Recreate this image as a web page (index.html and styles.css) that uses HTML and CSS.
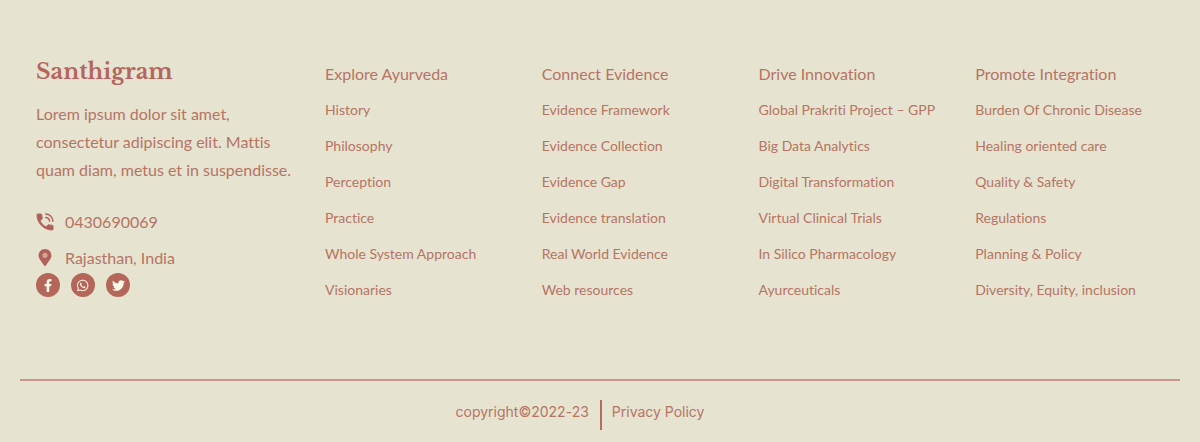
FILE: index.html
```html
<!DOCTYPE html>
<html lang="en">
<head>
<meta charset="utf-8">
<meta name="viewport" content="width=device-width, initial-scale=1">
<title>Santhigram</title>
<link rel="stylesheet" href="styles.css">
</head>
<body>
<footer class="footer">
  <div class="footer-main">
    <section class="brand">
      <h2 class="brand-name">Santhigram</h2>
      <p class="brand-text">Lorem ipsum dolor sit amet, consectetur adipiscing elit. Mattis quam diam, metus et in suspendisse.</p>
      <ul class="contact">
        <li>
          <svg class="contact-icon" viewBox="2 2 20 20" aria-hidden="true">
            <path fill="currentColor" stroke="currentColor" stroke-width="0.800" stroke-linejoin="round" d="M6.620 10.790c1.440 2.830 3.760 5.140 6.590 6.590l2.200-2.200c.27-.27.67-.36 1.020-.24 1.120.37 2.330.57 3.570.57.550 0 1 .45 1 1V20c0 .55-.45 1-1 1-9.390 0-17-7.610-17-17 0-.55.45-1 1-1h3.500c.55 0 1 .45 1 1 0 1.250.2 2.450.57 3.570.11.35.03.74-.25 1.020l-2.200 2.200z"/>
            <g fill="none" stroke="currentColor" stroke-width="1.600" stroke-linecap="round"><path d="M12.800 3.200A8 8 0 0 1 20.800 11.200"/><path d="M12.800 6.900A4.300 4.300 0 0 1 17.100 11.200"/></g>
          </svg>
          <a href="tel:0430690069">0430690069</a>
        </li>
        <li>
          <svg class="contact-icon" viewBox="-48 0 480 540" aria-hidden="true">
            <path fill="currentColor" d="M172.268 501.670C26.970 291.031 0 269.413 0 192 0 85.961 85.961 0 192 0s192 85.961 192 192c0 77.413-26.970 99.031-172.268 309.670-9.535 13.774-29.930 13.773-39.464 0z"/>
            <circle class="pin-eye" cx="192" cy="192" r="76"/>
          </svg>
          <span>Rajasthan, India</span>
        </li>
      </ul>
      <div class="social">
        <a href="#" aria-label="Facebook">
          <svg viewBox="0 0 320 512" aria-hidden="true"><path fill="currentColor" d="M279.140 288l14.220-92.660h-88.910v-60.130c0-25.350 12.420-50.060 52.240-50.060h40.420V6.260S260.430 0 225.360 0c-73.220 0-121.080 44.380-121.080 124.720v70.620H22.890V288h81.390v224h100.170V288z"/></svg>
        </a>
        <a href="#" aria-label="WhatsApp">
          <svg viewBox="0 0 448 512" aria-hidden="true"><path fill="currentColor" d="M380.900 97.100C339 55.100 283.200 32 223.900 32c-122.400 0-222 99.600-222 222 0 39.100 10.200 77.300 29.600 111L0 480l117.700-30.900c32.400 17.700 68.900 27 106.100 27h.1c122.300 0 224.100-99.600 224.100-222 0-59.300-25.200-115-67.100-157zm-157 341.600c-33.200 0-65.700-8.900-94-25.700l-6.700-4-69.800 18.300L72 359.200l-4.400-7c-18.500-29.400-28.200-63.300-28.200-98.200 0-101.700 82.800-184.500 184.600-184.500 49.300 0 95.600 19.200 130.400 54.100 34.800 34.900 56.200 81.200 56.100 130.500 0 101.800-84.900 184.600-186.600 184.600zm101.200-138.200c-5.500-2.800-32.800-16.200-37.900-18-5.100-1.900-8.800-2.800-12.500 2.800-3.700 5.600-14.300 18-17.600 21.800-3.200 3.700-6.500 4.200-12 1.400-32.600-16.300-54-29.100-75.500-66-5.700-9.800 5.700-9.100 16.300-30.300 1.800-3.700.9-6.900-.5-9.700-1.400-2.800-12.500-30.100-17.100-41.200-4.500-10.800-9.100-9.300-12.500-9.500-3.200-.2-6.900-.2-10.600-.2-3.700 0-9.700 1.400-14.800 6.900-5.100 5.600-19.400 19-19.400 46.300 0 27.300 19.900 53.700 22.600 57.400 2.800 3.700 39.100 59.700 94.800 83.800 35.200 15.200 49 16.500 66.600 13.900 10.700-1.600 32.800-13.400 37.400-26.400 4.600-13 4.600-24.100 3.200-26.400-1.300-2.500-5-3.900-10.500-6.600z"/></svg>
        </a>
        <a href="#" aria-label="Twitter">
          <svg viewBox="0 0 512 512" aria-hidden="true"><path fill="currentColor" d="M459.370 151.716c.325 4.548.325 9.097.325 13.645 0 138.720-105.583 298.558-298.558 298.558-59.452 0-114.680-17.219-161.137-47.106 8.447.974 16.568 1.299 25.340 1.299 49.055 0 94.213-16.568 130.274-44.832-46.132-.975-84.792-31.188-98.112-72.772 6.498.974 12.995 1.624 19.818 1.624 9.421 0 18.843-1.300 27.614-3.573-48.081-9.747-84.143-51.980-84.143-102.985v-1.299c13.969 7.797 30.214 12.670 47.431 13.319-28.264-18.843-46.781-51.005-46.781-87.391 0-19.492 5.197-37.360 14.294-52.954 51.655 63.675 129.300 105.258 216.365 109.807-1.624-7.797-2.599-15.918-2.599-24.040 0-57.828 46.782-104.934 104.934-104.934 30.213 0 57.502 12.670 76.670 33.137 23.715-4.548 46.456-13.320 66.599-25.340-7.798 24.366-24.366 44.833-46.132 57.827 21.117-2.273 41.584-8.122 60.426-16.243-14.292 20.791-32.161 39.308-52.628 54.253z"/></svg>
        </a>
      </div>
    </section>
    <nav class="links" aria-labelledby="explore">
      <h3 id="explore">Explore Ayurveda</h3>
      <ul>
        <li><a href="#">History</a></li>
        <li><a href="#">Philosophy</a></li>
        <li><a href="#">Perception</a></li>
        <li><a href="#">Practice</a></li>
        <li><a href="#">Whole System Approach</a></li>
        <li><a href="#">Visionaries</a></li>
      </ul>
    </nav>
    <nav class="links" aria-labelledby="connect">
      <h3 id="connect">Connect Evidence</h3>
      <ul>
        <li><a href="#">Evidence Framework</a></li>
        <li><a href="#">Evidence Collection</a></li>
        <li><a href="#">Evidence Gap</a></li>
        <li><a href="#">Evidence translation</a></li>
        <li><a href="#">Real World Evidence</a></li>
        <li><a href="#">Web resources</a></li>
      </ul>
    </nav>
    <nav class="links" aria-labelledby="drive">
      <h3 id="drive">Drive Innovation</h3>
      <ul>
        <li><a href="#">Global Prakriti Project – GPP</a></li>
        <li><a href="#">Big Data Analytics</a></li>
        <li><a href="#">Digital Transformation</a></li>
        <li><a href="#">Virtual Clinical Trials</a></li>
        <li><a href="#">In Silico Pharmacology</a></li>
        <li><a href="#">Ayurceuticals</a></li>
      </ul>
    </nav>
    <nav class="links" aria-labelledby="promote">
      <h3 id="promote">Promote Integration</h3>
      <ul>
        <li><a href="#">Burden Of Chronic Disease</a></li>
        <li><a href="#">Healing oriented care</a></li>
        <li><a href="#">Quality &amp; Safety</a></li>
        <li><a href="#">Regulations</a></li>
        <li><a href="#">Planning &amp; Policy</a></li>
        <li><a href="#">Diversity, Equity, inclusion</a></li>
      </ul>
    </nav>
  </div>
  <div class="footer-bottom">
    <span class="copyright">copyright©2022-23</span>
    <a class="privacy" href="#">Privacy Policy</a>
  </div>
</footer>
</body>
</html>
```
FILE: styles.css
```css
* {
  box-sizing: border-box;
}

body {
  margin: 0;
  background: #e6e3d0;
  color: #b67465;
  font-family: Lato, "Open Sans", sans-serif;
  font-size: 16px;
  font-variant-ligatures: none;
}

h2, h3, p, ul {
  margin: 0;
  padding: 0;
}

ul {
  list-style: none;
}

a {
  color: inherit;
  text-decoration: none;
}

.footer-main {
  display: grid;
  grid-template-columns: 289px repeat(4, minmax(0, 1fr));
  padding: 56px 8px 71px 36px;
}

.brand-name {
  font-family: "Libre Baskerville", "Liberation Serif", serif;
  font-size: 22px;
  font-weight: 700;
  line-height: 32px;
  color: #b5655d;
}

.brand-text {
  margin-top: 12px;
  padding-right: 32px;
  line-height: 28px;
}

.contact {
  margin-top: 28px;
}

.contact li {
  display: flex;
  align-items: center;
  gap: 11px;
  line-height: 20px;
}

.contact li + li {
  margin-top: 16px;
}

.contact-icon {
  width: 18px;
  height: 18px;
  color: #b0615a;
}

.pin-eye {
  fill: #d3a596;
}

.social {
  display: flex;
  gap: 11px;
  margin-top: 5px;
}

.social a {
  display: flex;
  align-items: center;
  justify-content: center;
  width: 24px;
  height: 24px;
  border-radius: 50%;
  background: #b5665a;
  color: #fff8e8;
}

.social svg {
  height: 13px;
}

.links h3 {
  padding-top: 8px;
  font-size: 16px;
  font-weight: 400;
  line-height: 20px;
}

.links ul {
  margin-top: 8px;
}

.links li {
  font-size: 14px;
  line-height: 36px;
}

.footer-bottom {
  display: flex;
  justify-content: center;
  margin: 0 20px;
  padding: 19px 40px 12px 0;
  border-top: 2px solid #c9958a;
  font-family: Inter, sans-serif;
  font-size: 14px;
  line-height: 24px;
}

.copyright {
  padding-right: 11px;
}

.privacy {
  height: 30px;
  padding-left: 10px;
  border-left: 2px solid #b46e5e;
}
```
